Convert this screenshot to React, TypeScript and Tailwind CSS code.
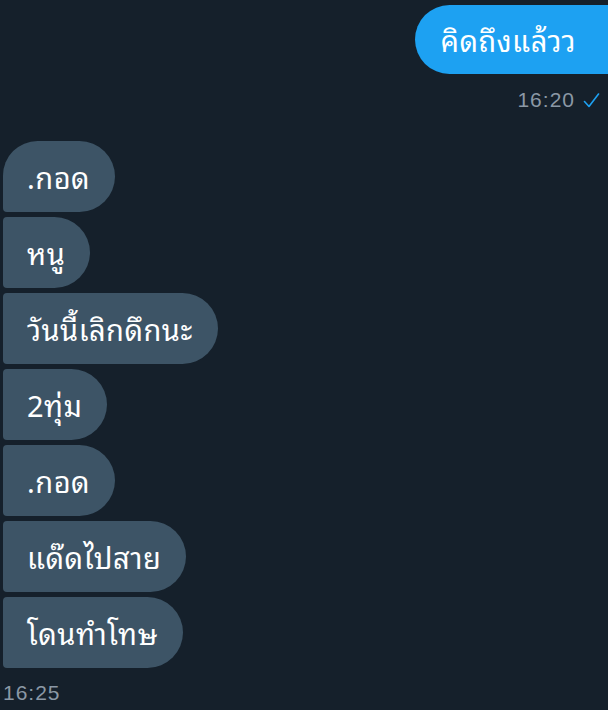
import React from "react";

const left = [".กอด", "หนู", "วันนี้เลิกดึกนะ", "2ทุ่ม", ".กอด", "แด๊ดไปสาย", "โดนทำโทษ"];

function corner(i: number) {
  if (i === 0) return "rounded-tl-[35px] rounded-bl-[4px]";
  return "rounded-tl-[4px] rounded-bl-[4px]";
}

export default function App() {
  return (
    <div className="w-[608px] h-[710px] overflow-hidden bg-[#15202b] text-white font-['Noto_Sans_Thai_Looped','Noto_Sans',sans-serif]">
      <div className="flex justify-end pt-[5px]">
        <div className="h-[69px] flex items-center pl-[26px] pr-[44px] mr-[-12px] rounded-l-[35px] bg-[#1da1f2] text-[29px] tracking-[0.5px]">
          คิดถึงแล้วว
        </div>
      </div>
      <div className="flex justify-end items-center gap-[8px] pr-[8px] mt-[14px] text-[#8b98a5] text-[21px] leading-[24px] tracking-[1px] font-['Liberation_Sans',sans-serif]">
        <span>16:20</span>
        <svg width="17" height="15" viewBox="0 0 17 15" fill="none" stroke="#1da1f2" strokeWidth="1.6" strokeLinecap="round" strokeLinejoin="round">
          <path d="M1.5 8.5l4.5 5 9.5-12.5" />
        </svg>
      </div>
      <div className="flex flex-col items-start gap-[5px] pl-[3px] mt-[29px]">
        {left.map((t, i) => (
          <div
            key={i}
            className={`h-[71px] flex items-center pl-[24px] pr-[25px] rounded-r-[36px] bg-[#3d5466] text-[29px] tracking-[0.5px] ${corner(i)}`}
          >
            {t}
          </div>
        ))}
      </div>
      <div className="pl-[3px] mt-[13px] text-[21px] leading-[24px] tracking-[1px] text-[#8b98a5] font-['Liberation_Sans',sans-serif]">
        16:25
      </div>
    </div>
  );
}
